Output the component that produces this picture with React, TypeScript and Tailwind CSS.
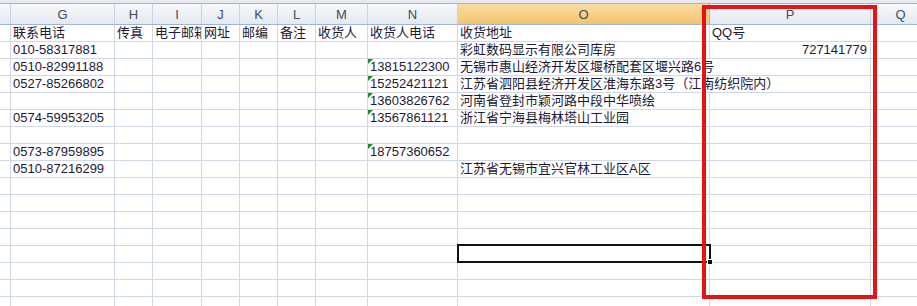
import React from 'react';

type Cell = { text: string; right?: boolean; spill?: boolean; tri?: boolean };

// column widths incl. right grid line
const widths = [11, 104, 38, 49, 38, 38, 38, 52, 90, 252, 161, 60];
const letters = ['', 'G', 'H', 'I', 'J', 'K', 'L', 'M', 'N', 'O', 'P', 'Q'];

const rows: Record<number, Cell>[] = [
  {
    1: { text: '联系电话' },
    2: { text: '传真' },
    3: { text: '电子邮箱' },
    4: { text: '网址' },
    5: { text: '邮编' },
    6: { text: '备注' },
    7: { text: '收货人' },
    8: { text: '收货人电话' },
    9: { text: '收货地址' },
    10: { text: 'QQ号' },
  },
  {
    1: { text: '010-58317881' },
    9: { text: '彩虹数码显示有限公司库房', spill: true },
    10: { text: '727141779', right: true },
  },
  {
    1: { text: '0510-82991188' },
    8: { text: '13815122300', tri: true },
    9: { text: '无锡市惠山经济开发区堰桥配套区堰兴路6号', spill: true },
  },
  {
    1: { text: '0527-85266802' },
    8: { text: '15252421121', tri: true },
    9: { text: '江苏省泗阳县经济开发区淮海东路3号（江南纺织院内）', spill: true },
  },
  {
    8: { text: '13603826762', tri: true },
    9: { text: '河南省登封市颖河路中段中华喷绘', spill: true },
  },
  {
    1: { text: '0574-59953205' },
    8: { text: '13567861121', tri: true },
    9: { text: '浙江省宁海县梅林塔山工业园', spill: true },
  },
  {},
  {
    1: { text: '0573-87959895' },
    8: { text: '18757360652', tri: true },
  },
  {
    1: { text: '0510-87216299' },
    9: { text: '江苏省无锡市宜兴官林工业区A区', spill: true },
  },
  {}, {}, {}, {}, {}, {}, {}, {},
];

const font = { fontFamily: '"Liberation Sans", Arial, "Noto Sans CJK SC", sans-serif' };

export default function App() {
  return (
    <div className="relative w-[917px] h-[306px] overflow-hidden bg-white text-[13px]" style={font}>
      <div className="h-[3px] bg-[#e6eaf0]" />

      {/* column headers */}
      <div className="flex h-[22px] border-y border-[#9eb6ce]">
        {widths.map((w, i) => (
          <div
            key={i}
            style={{ width: w }}
            className={
              'shrink-0 flex items-center justify-center border-r text-[#3e4b5b] leading-none ' +
              (i === 9
                ? 'bg-gradient-to-b from-[#f9dca6] to-[#f3c46c] border-[#e0b35e]'
                : 'bg-gradient-to-b from-[#f7f9fc] to-[#e3e9f1] border-[#c9d3de]')
            }
          >
            {letters[i]}
          </div>
        ))}
      </div>

      {/* sheet rows */}
      {rows.map((row, r) => (
        <div key={r} className="flex h-[17px]">
          {widths.map((w, c) => {
            const cell = row[c];
            return (
              <div
                key={c}
                style={{ width: w }}
                className={
                  'shrink-0 relative border-r border-b border-[#d0d7e5] text-[#1d1a35] leading-[16px] whitespace-nowrap ' +
                  (cell?.spill ? 'overflow-visible' : 'overflow-hidden') +
                  (cell?.right ? ' text-right pr-[3px]' : ' pl-[2px]')
                }
              >
                {cell?.tri && (
                  <span className="absolute left-0 top-0 w-0 h-0 border-t-[5px] border-r-[5px] border-t-[#1b8a2a] border-r-transparent" />
                )}
                {cell && (
                  <span className={cell.spill ? 'relative z-10 bg-white' : ''}>{cell.text}</span>
                )}
              </div>
            );
          })}
        </div>
      ))}

      {/* active cell O14 */}
      <div className="absolute left-[457px] top-[244px] w-[254px] h-[19px] border-[2px] border-[#111] z-20" />
      <div className="absolute left-[707px] top-[259px] w-[6px] h-[6px] bg-[#111] border border-white z-20" />

      {/* red annotation box */}
      <div className="absolute left-[702px] top-[5px] w-[175px] h-[294px] border-[4px] border-[#e41414] z-30" />
    </div>
  );
}
